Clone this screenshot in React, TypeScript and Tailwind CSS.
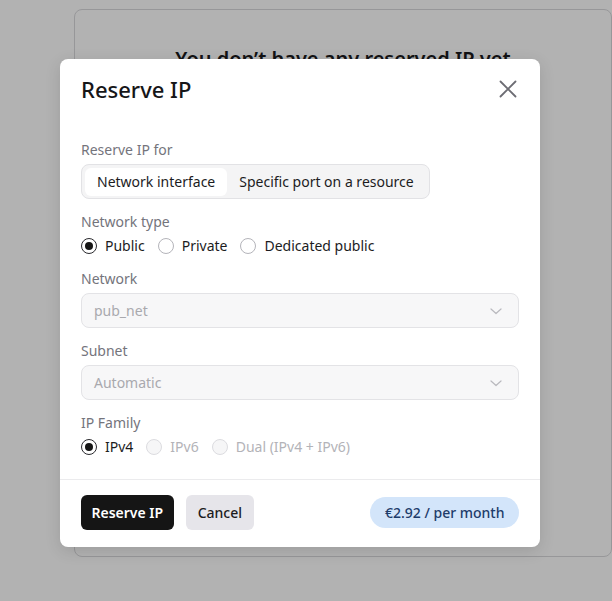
import React from "react";

function Radio({ label, checked, disabled }: { label: string; checked?: boolean; disabled?: boolean }) {
  return (
    <div className="flex items-center gap-2">
      <span
        className={
          "flex h-4 w-4 items-center justify-center rounded-full border " +
          (checked
            ? "border-[#2a2a2e] bg-white"
            : disabled
            ? "border-[#dcdce0] bg-[#f6f6f7]"
            : "border-[#b4b4ba] bg-white")
        }
      >
        {checked && <span className="h-2 w-2 rounded-full bg-[#151515]" />}
      </span>
      <span className={"text-sm leading-5 " + (disabled ? "text-[#b3b3b8]" : "text-[#1c1c1e]")}>{label}</span>
    </div>
  );
}

function Chevron() {
  return (
    <svg width="14" height="14" viewBox="0 0 14 14" fill="none">
      <path d="M2 5l5 4.5L12 5" stroke="#b9b9be" strokeWidth="1.2" strokeLinecap="round" strokeLinejoin="round" />
    </svg>
  );
}

function Select({ value }: { value: string }) {
  return (
    <div className="flex h-[35px] items-center justify-between rounded-lg border border-[#e3e3e6] bg-[#f7f7f8] pl-3 pr-[15px]">
      <span className="text-sm text-[#a9a9ae]">{value}</span>
      <Chevron />
    </div>
  );
}

function Label({ children }: { children: React.ReactNode }) {
  return <div className="mb-1 text-sm leading-5 text-[#74747c]">{children}</div>;
}

export default function App() {
  return (
    <div className="relative h-[601px] w-[612px] overflow-hidden bg-white" style={{ fontFamily: '"Noto Sans", sans-serif' }}>
      <div className="pl-[74px] pt-[9px]">
        <div className="h-[548px] w-[538px] rounded-lg border border-[#d9d9dc] bg-white pt-[35px] text-center">
          <div className="text-xl font-semibold leading-7 text-[#1b1b1d]">You don’t have any reserved IP yet</div>
        </div>
      </div>
      <div className="absolute inset-0 bg-black/30" />
      <div className="absolute left-[60px] top-[59px] w-[480px] rounded-lg bg-white shadow-[0_4px_16px_rgba(0,0,0,0.12)]">
        <div className="flex items-center justify-between pl-[21px] pr-[23px] pt-[15px]">
          <div className="text-[22px] font-medium leading-[30px] text-[#161618]">Reserve IP</div>
          <svg width="18" height="18" viewBox="0 0 18 18" fill="none">
            <path d="M1.5 1.5l15 15M16.5 1.5l-15 15" stroke="#6c6c73" strokeWidth="1.8" strokeLinecap="round" />
          </svg>
        </div>
        <div className="flex flex-col gap-[13px] px-[21px] pb-[22px] pt-9">
          <div>
            <Label>Reserve IP for</Label>
            <div className="inline-flex h-[35px] items-center rounded-lg border border-[#e2e2e5] bg-[#f4f4f5] px-[3px]">
              <div className="flex h-[28px] items-center rounded-md bg-white px-3 text-sm text-[#1c1c1e]">Network interface</div>
              <div className="flex h-[28px] items-center px-3 text-sm text-[#1c1c1e]">Specific port on a resource</div>
            </div>
          </div>
          <div>
            <Label>Network type</Label>
            <div className="flex items-center gap-[13px]">
              <Radio label="Public" checked />
              <Radio label="Private" />
              <Radio label="Dedicated public" />
            </div>
          </div>
          <div>
            <Label>Network</Label>
            <Select value="pub_net" />
          </div>
          <div>
            <Label>Subnet</Label>
            <Select value="Automatic" />
          </div>
          <div>
            <Label>IP Family</Label>
            <div className="flex items-center gap-[13px]">
              <Radio label="IPv4" checked />
              <Radio label="IPv6" disabled />
              <Radio label="Dual (IPv4 + IPv6)" disabled />
            </div>
          </div>
        </div>
        <div className="flex items-center justify-between border-t border-[#ebebed] pb-[17px] pl-[21px] pr-[21px] pt-[15px]">
          <div className="flex items-center gap-3">
            <button className="flex h-[35px] items-center rounded-md bg-[#151515] px-[10.5px] text-sm font-semibold text-white">Reserve IP</button>
            <button className="flex h-[35px] items-center rounded-md bg-[#e6e5ea] px-3 text-sm font-medium text-[#1c1c1e]">Cancel</button>
          </div>
          <div className="flex h-[31px] items-center rounded-full bg-[#d3e5fa] px-[14.5px] text-sm font-medium text-[#1e3c6a]">€2.92 / per month</div>
        </div>
      </div>
    </div>
  );
}
